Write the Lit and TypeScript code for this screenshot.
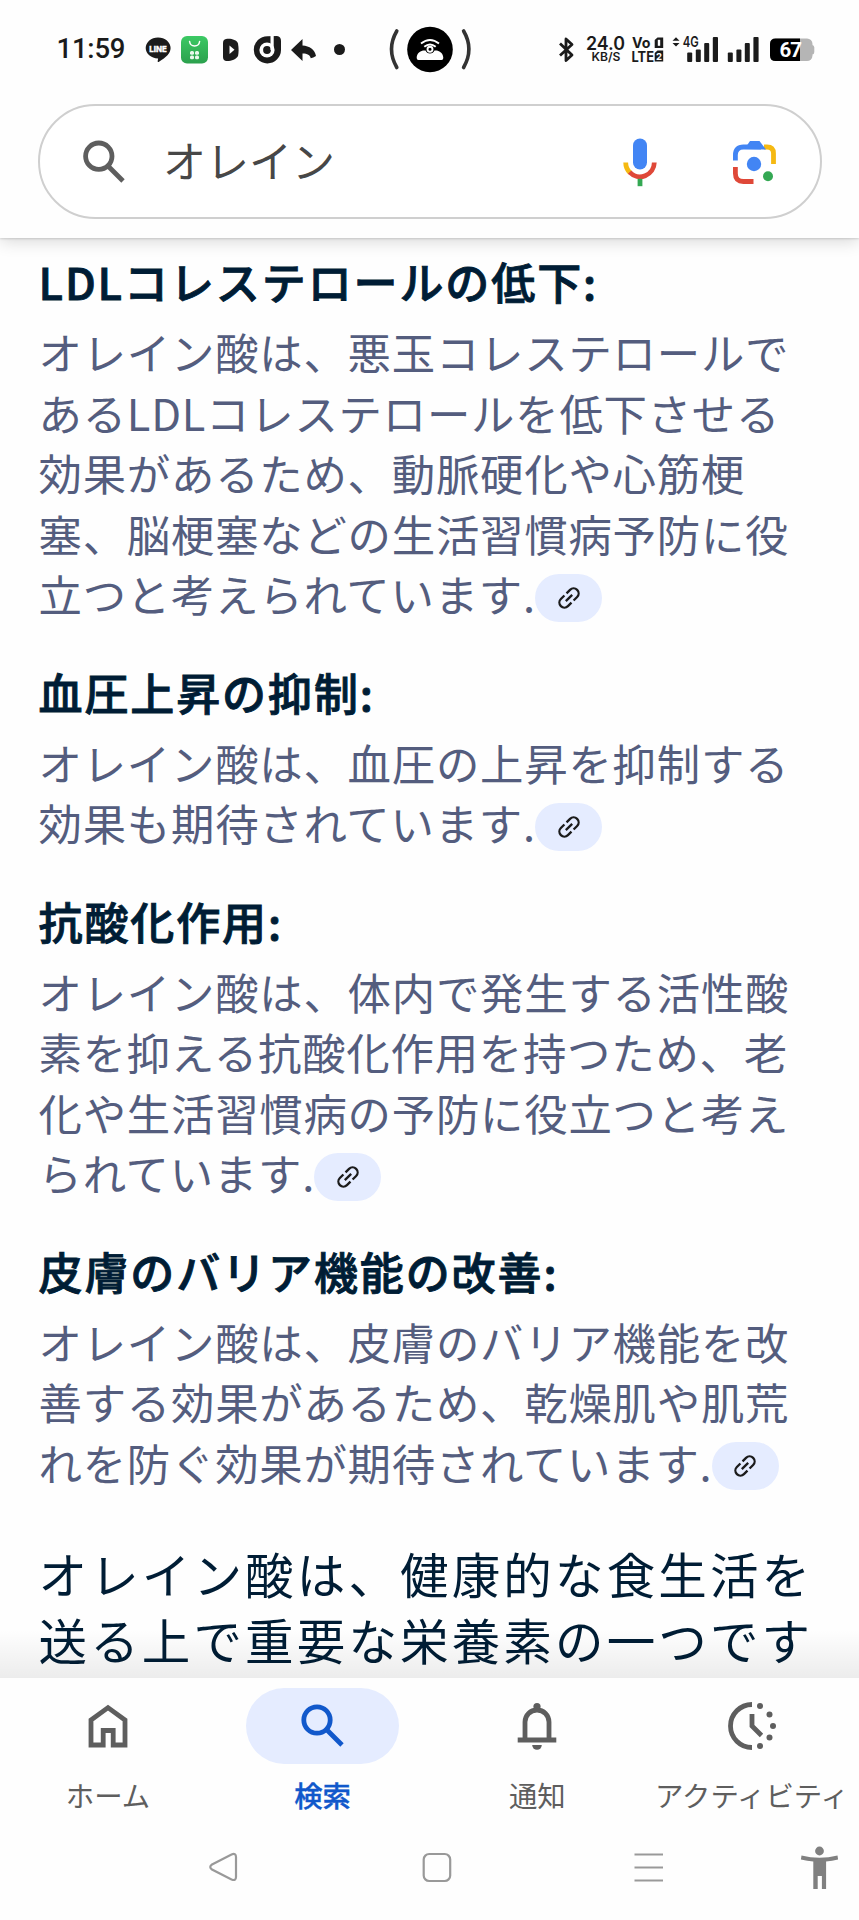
import { LitElement, html, css, svg } from "lit";
import { customElement } from "lit/decorators.js";

interface Section { title: string; lines: string[]; }

const SECTIONS: Section[] = [
  { title: "LDLコレステロールの低下:", lines: ["オレイン酸は、悪玉コレステロールで", "あるLDLコレステロールを低下させる", "効果があるため、動脈硬化や心筋梗", "塞、脳梗塞などの生活習慣病予防に役", "立つと考えられています."] },
  { title: "血圧上昇の抑制:", lines: ["オレイン酸は、血圧の上昇を抑制する", "効果も期待されています."] },
  { title: "抗酸化作用:", lines: ["オレイン酸は、体内で発生する活性酸", "素を抑える抗酸化作用を持つため、老", "化や生活習慣病の予防に役立つと考え", "られています."] },
  { title: "皮膚のバリア機能の改善:", lines: ["オレイン酸は、皮膚のバリア機能を改", "善する効果があるため、乾燥肌や肌荒", "れを防ぐ効果が期待されています."] },
];

const bars = (x: number) => svg`
  <rect x=${x} y="52.500" width="5" height="9.500" rx="1"/>
  <rect x=${x + 8.6} y="49.500" width="5" height="12.500" rx="1"/>
  <rect x=${x + 17} y="43" width="5" height="19" rx="1"/>
  <rect x=${x + 25.6} y="37" width="5.200" height="25" rx="1"/>`;

@customElement("status-bar")
class StatusBar extends LitElement {
  static styles = css`
    :host { display: block; height: 104px; }
    svg { display: block; }
    text { font-family: Roboto, "Noto Sans", sans-serif; }
    .inter { font-family: Inter, Roboto, sans-serif; }
  `;
  render() {
    return html`<svg width="859" height="104" viewBox="0 0 859 104" fill="#1b1b1b">
      <defs><linearGradient id="g" x1="0" y1="0" x2="0" y2="1"><stop offset="0" stop-color="#3cc964"/><stop offset="1" stop-color="#2ba04d"/></linearGradient></defs>
      <text x="56.500" y="58.300" font-size="27.500" font-weight="500" textLength="69">11:59</text>
      <path d="M158 37.500c7 0 12.600 4.800 12.600 10.600 0 5-4.400 9.500-11.600 13.700-.8.400-1.500.2-1.300-.8l.4-2.400c-7-.2-12.400-4.800-12.400-10.500 0-5.800 5.500-10.600 12.300-10.600z"/>
      <text class="inter" x="149.300" y="52" font-size="7.600" font-weight="800" fill="#fff" stroke="#fff" stroke-width=".3" textLength="17.500" lengthAdjust="spacingAndGlyphs">LINE</text>
      <rect x="181" y="36" width="27" height="27.500" rx="6" fill="url(#g)"/>
      <path d="M189.600 41.500c.8 6 9.200 6 10 0" fill="none" stroke="#fff" stroke-width="1.500" stroke-linecap="round"/>
      <g fill="#e9f8ed"><rect x="190" y="51" width="4" height="3.800" rx="1.500"/><rect x="195" y="51" width="4" height="3.800" rx="1.500"/><rect x="190" y="55.500" width="4" height="3.800" rx="1.500"/><rect x="195" y="55.500" width="4" height="3.800" rx="1.500"/></g>
      <path d="M226 39c4.500-.8 10.500.5 12 4.500.8 4 .8 9 0 12.500-1.500 3.500-8 5.500-12 5-2-.5-3-1.500-3-4V43c0-2.500 1-3.500 3-4z"/>
      <path d="M229.500 45.500v8.500l5-4.250z" fill="#fff"/>
      <path d="M267.500 36.200A13.600 13.600 0 1 0 281 50V41q0-4.500-4-5z"/>
      <circle cx="267" cy="50" r="7.600" fill="#fff"/><circle cx="267" cy="50" r="3.900"/>
      <rect x="270.500" y="35" width="3.200" height="15" fill="#fff"/>
      <path d="M291 50l11.500-11v6.500c7 .2 12.500 4.500 13.500 10.500q-2.800 1.800-5.300 2.200c-.5-3-3.700-4.700-8.200-4.600V61z"/>
      <circle cx="339.500" cy="49.500" r="5.500"/>
      <g fill="none" stroke="#333" stroke-width="3.600" stroke-linecap="round"><path d="M396.800 31q-10.600 18 0 36.500"/><path d="M463.600 31q10.600 18 0 36.500"/></g>
      <circle cx="430" cy="49.500" r="22.800" fill="#000"/>
      <path d="M418.500 60q-1.800 0-1.800-2c0-4 2.600-6.600 6.300-7.500h2.500a4.900 4.900 0 0 0 9 0h2.500c3.500.9 6.300 3.500 6.300 7.500q0 2-1.800 2z" fill="#fff"/>
      <g fill="none" stroke="#fff" stroke-width="1.900"><circle cx="430" cy="49.200" r="2.500"/><path d="M421 43.600q9-7.200 18 0M424.300 46.800q5.700-4.800 11.400 0"/></g>
      <path d="M560 43.500l12 11.500-6 5.500V39l6 5.500-12 11" fill="none" stroke="#1b1b1b" stroke-width="2.800" stroke-linejoin="round"/>
      <text class="inter" x="586" y="50" font-size="18.200" font-weight="600" textLength="39" lengthAdjust="spacingAndGlyphs">24.0</text>
      <text class="inter" x="591.500" y="61" font-size="12" font-weight="600" textLength="29" lengthAdjust="spacingAndGlyphs">KB/S</text>
      <text class="inter" x="632" y="48.200" font-size="14.600" font-weight="700" textLength="18.500" lengthAdjust="spacingAndGlyphs">Vo</text>
      <text class="inter" x="631.500" y="61.500" font-size="14.600" font-weight="700" textLength="22.500" lengthAdjust="spacingAndGlyphs">LTE</text>
      <path d="M657.500 37.500h5.700v10.500h-8.500V40z"/><rect x="657.800" y="39.800" width="2.400" height="6" fill="#fff"/>
      <path d="M657.500 50.500h5.700v11h-8.500V53z"/><text class="inter" x="656" y="60" font-size="9.500" font-weight="700" fill="#fff">2</text>
      <path d="M672.500 40.800l3.500-3.600 3.500 3.600zM672.500 43l3.500 3.600 3.500-3.600z"/>
      <text class="inter" x="682.700" y="47.200" font-size="14.200" font-weight="600" textLength="16" lengthAdjust="spacingAndGlyphs">4G</text>
      ${bars(687.200)}${bars(727.800)}
      <rect x="770" y="38.500" width="42.500" height="22.500" rx="5.500" fill="#b5b5b5"/>
      <path d="M812 45q2.300 0 2.300 2.500v4.500q0 2.500-2.300 2.500z" fill="#b5b5b5"/>
      <path d="M775.500 38.500H800V61h-24.500q-5.500 0-5.500-5.500V44q0-5.500 5.500-5.500z" fill="#000"/>
      <text x="779.500" y="57.200" font-size="20.500" font-weight="700" fill="#fff" textLength="22.500">67</text>
    </svg>`;
  }
}

@customElement("search-box")
class SearchBox extends LitElement {
  static styles = css`
    :host { display: flex; align-items: center; box-sizing: border-box; height: 115px; margin: 0 37.500px 0 38px; border: 2.500px solid #cfcfcf; border-radius: 58px; padding: 0 42.500px 0 41px; background: #fff; }
    .q { flex: 1; padding: 0 0 5px 36px; font: 400 43px/60px "Noto Sans CJK JP", sans-serif; color: #474747; }
    .mic { margin-right: 71px; }
    svg { display: block; flex: none; }
  `;
  render() {
    return html`
      <svg width="46" height="46" viewBox="0 0 46 46" fill="none" stroke="#5e5e5e" stroke-width="4.800"><circle cx="17.800" cy="17.200" r="13.200"/><path d="M27 27l15 15"/></svg>
      <span class="q">オレイン</span>
      <svg class="mic" width="40" height="50" viewBox="0 0 40 50" fill="none" stroke-width="4.800">
        <rect x="13" y="1.500" width="14" height="31" rx="7" fill="#4285f4"/>
        <path d="M5.700 25.500c0 4 1.600 7.600 4.300 10.200" stroke="#f5b912"/>
        <path d="M9.600 35.200a14.300 14.300 0 0 0 24.700-9.700" stroke="#df4838"/>
        <path d="M20 41.800v7.400" stroke="#34a853"/>
      </svg>
      <svg width="46" height="46" viewBox="0 0 46 46" fill="none" stroke-width="4.800">
        <path d="M33 8h3q6.500 0 6.500 6.500V25" stroke="#f5b912"/>
        <path d="M4.400 21.500V16q0-8 8-8H30" stroke="#4285f4"/>
        <path d="M13.500 10l5.500-8h9.500l6.500 8.500z" fill="#4285f4"/>
        <path d="M4.400 28v6.500q0 8 8 8h10.100" stroke="#df4838"/>
        <circle cx="23" cy="25" r="7.200" fill="#4285f4"/><circle cx="37" cy="37.300" r="5" fill="#34a853"/>
      </svg>`;
  }
}

@customElement("cite-chip")
class CiteChip extends LitElement {
  static styles = css`
    :host { display: inline-flex; align-items: center; justify-content: center; width: 67px; height: 48px; border-radius: 24px; background: #e5ecff; vertical-align: 2.500px; margin-left: -.6px; }
  `;
  render() {
    return html`<svg width="24" height="24" viewBox="0 0 24 24" fill="none" stroke="#1b1b1b" stroke-width="2.300"><g transform="rotate(-45 12 12)"><path d="M10.500 7H5.500a5 5 0 0 0 0 10h5M13.500 7h5a5 5 0 0 1 0 10h-5M7.500 12h9"/></g></svg>`;
  }
}

@customElement("bottom-tabs")
class BottomTabs extends LitElement {
  static styles = css`
    :host { display: grid; flex: none; box-sizing: border-box; grid-template-columns: repeat(4, 214.700px); height: 143px; padding: 10px 0 0 .6px; background: #fefefe; position: relative; z-index: 1; }
    .tab { display: flex; flex-direction: column; align-items: center; color: #5e5e5e; }
    .pill { width: 153px; height: 76px; border-radius: 38px; display: grid; place-items: center; }
    .on .pill { background: #e5ecff; }
    .on { color: #1158cb; }
    .label { margin-top: 10px; font: 400 28.400px/42px "Noto Sans CJK JP", sans-serif; white-space: nowrap; }
    .on .label { font-weight: 500; -webkit-text-stroke: .4px currentColor; }
  `;
  render() {
    return html`
      <div class="tab"><div class="pill"><svg width="48" height="48" viewBox="0 0 48 48" fill="none" stroke="currentColor" stroke-width="4.800"><path d="M7 43V18L24 5.600 41 18v25H29.200V28.500H19.200V43z"/></svg></div><div class="label">ホーム</div></div>
      <div class="tab on"><div class="pill"><svg width="48" height="48" viewBox="0 0 48 48" fill="none" stroke="currentColor" stroke-width="4.800"><circle cx="18" cy="18" r="13.200"/><path d="M27.500 27.500L43 43"/></svg></div><div class="label">検索</div></div>
      <div class="tab"><div class="pill"><svg width="48" height="48" viewBox="0 0 48 48" fill="none" stroke="currentColor" stroke-width="4.800"><path d="M12 37V20a12 12 0 0 1 24 0v17M4.700 38h38.600"/><circle cx="24" cy="4.500" r="3.600" fill="currentColor" stroke="none"/><path d="M19.200 43h9.600a4.800 4.800 0 0 1-9.600 0z" fill="currentColor" stroke="none"/></svg></div><div class="label">通知</div></div>
      <div class="tab"><div class="pill"><svg width="48" height="48" viewBox="0 0 48 48" fill="none" stroke="currentColor" stroke-width="4.800"><path d="M24 2.500a21.500 21.500 0 0 0 0 43M24 12v12l9.500 9.500"/><g fill="currentColor" stroke="none"><circle cx="32" cy="4" r="3"/><circle cx="41.500" cy="12.500" r="3"/><circle cx="45" cy="24" r="3"/><circle cx="41.500" cy="35.500" r="3"/><circle cx="32" cy="44" r="3"/></g></svg></div><div class="label">アクティビティ</div></div>`;
  }
}

@customElement("app-root")
class AppRoot extends LitElement {
  static styles = css`
    :host { display: flex; flex-direction: column; height: 1920px; width: 859px; overflow: hidden; background: #fefefe; font-family: "Noto Sans CJK JP", sans-serif; }
    header { flex: none; height: 238px; background: #fefefe; box-shadow: 0 1px 2px rgba(0,0,0,.14), 0 3px 16px rgba(0,0,0,.16); position: relative; z-index: 1; }
    main { flex: none; height: 1440px; box-sizing: border-box; padding: 13px 0 0 38.500px; overflow: hidden; white-space: nowrap; position: relative; }
    h2 { margin: 0 0 10px; font-size: 44px; font-weight: 500; line-height: 60px; letter-spacing: 1.900px; color: #001d35; -webkit-text-stroke: .9px #001d35; }
    p { margin: 0 0 38px; font-size: 43.400px; line-height: 60.500px; letter-spacing: .77px; color: #545d7e; }
    .line { height: 60.500px; }
    p.outro { font-size: 48.500px; line-height: 66px; letter-spacing: 3.150px; color: #001d35; margin: 47.500px 0 0; }
    .fade { position: absolute; left: 0; right: 0; bottom: 0; height: 48px; background: linear-gradient(rgba(0,0,0,0), rgba(0,0,0,.07)); }
    nav { flex: 1; }
    nav svg { display: block; }
  `;
  render() {
    return html`
      <header><status-bar></status-bar><search-box></search-box></header>
      <main>
        ${SECTIONS.map(s => html`<h2>${s.title}</h2><p>${s.lines.map((l, i) => html`<div class="line">${l}${i === s.lines.length - 1 ? html`<cite-chip></cite-chip>` : ""}</div>`)}</p>`)}
        <p class="outro">オレイン酸は、健康的な食生活を<br>送る上で重要な栄養素の一つです</p>
        <div class="fade"></div>
      </main>
      <bottom-tabs></bottom-tabs>
      <nav><svg width="859" height="99" viewBox="0 0 859 99" fill="none" stroke="#999" stroke-width="2.200">
        <path d="M212 43.500l19.500-10q4.500-1.800 4.500 2.500v20q0 4.200-4.500 2.500l-19.500-10q-3.500-2.500 0-5z"/>
        <rect x="423.700" y="33" width="26.500" height="27" rx="5.500"/>
        <path d="M634.500 33.500h28.500M634.500 46.500h28.500M634.500 59.500h28.500"/>
        <g fill="#808080" stroke="none"><circle cx="819.500" cy="30" r="4.400"/><path d="M801.500 34.500q18 4.500 36 0l.6 4q-6 1.500-12 2V68h-4.200V55h-4.200v13h-4.400V40.500q-6-.5-12.400-2z"/></g>
      </svg></nav>`;
  }
}
